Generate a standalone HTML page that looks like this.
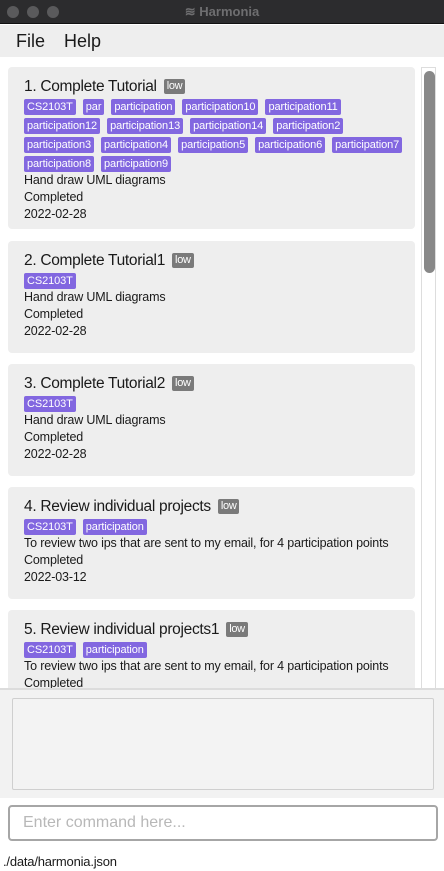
<!DOCTYPE html>
<html><head><meta charset="utf-8"><style>
*{box-sizing:border-box;margin:0;padding:0}
body{width:444px;height:871px;overflow:hidden;background:#fff;font-family:"Liberation Sans",sans-serif;color:#1a1a1a;position:relative}
.tb{position:absolute;left:0;top:0;width:444px;height:24px;background:#2c2c2e;border-bottom:1px solid #111}
.dot{position:absolute;top:6px;width:12px;height:12px;border-radius:50%;background:#5a5a5c}
.tt{position:absolute;left:0;width:444px;top:4px;text-align:center;color:#6e6e70;font-weight:bold;font-size:13px}
.menu{position:absolute;top:25px;left:0;width:444px;height:32px;background:#eeeeee;font-size:18px}
.menu span{position:absolute;top:6px}
.list{position:absolute;top:57px;left:0;width:444px;height:631px;overflow:hidden;background:#fff}
.card{position:absolute;left:8px;width:407px;background:#eeeeee;border-radius:4px;padding:10px 0 9px 16px}
.t{font-size:15.5px;line-height:20px;height:20px;white-space:nowrap;letter-spacing:-0.3px}
.low{display:inline-block;background:#7a7a7a;color:#fff;font-size:11px;line-height:15px;padding:0 3px;border-radius:2px;vertical-align:2px;margin-left:3px;letter-spacing:-0.3px}
.tags{margin-top:2px;display:flex;flex-wrap:wrap;gap:3px 7px;padding-right:0;margin-right:-4px}
.tag{background:#8267e0;color:#fff;font-size:11px;line-height:16px;height:16px;padding:0 3px;border-radius:2px;letter-spacing:-0.1px}
.l{font-size:12.5px;line-height:17px;white-space:nowrap;letter-spacing:-0.15px}
.sb{position:absolute;left:421px;top:67px;width:15px;height:621px;border:1px solid #ddd;border-bottom:none;background:#fff}
.th{position:absolute;left:2px;top:3px;width:11px;height:202px;background:#888;border-radius:6px}
.res{position:absolute;top:688px;left:0;width:444px;height:110px;background:#f2f2f2;border-top:2px solid #dcdcdc}
.rb{position:absolute;left:12px;top:8px;width:422px;height:92px;border:1px solid #cfcfcf;background:#f3f3f3;border-radius:2px}
.cmd{position:absolute;left:8px;top:805px;width:430px;height:36px;border:2px solid #a6a6a6;border-radius:4px;background:#fff;color:#b8b8b8;font-size:16px;padding:7px 0 0 13px}
.st{position:absolute;left:3px;top:854px;font-size:13px;letter-spacing:-0.2px}
</style></head><body>
<div class="tb"><div class="dot" style="left:7px"></div><div class="dot" style="left:27px"></div><div class="dot" style="left:47px"></div><div class="tt">≋ Harmonia</div></div>
<div class="menu"><span style="left:16px">File</span><span style="left:64px">Help</span></div>
<div class="list">
<div class="card" style="top:10px;height:162px"><div class="t">1. Complete Tutorial <span class="low">low</span></div>
<div class="tags"><span class="tag">CS2103T</span><span class="tag">par</span><span class="tag">participation</span><span class="tag">participation10</span><span class="tag">participation11</span><span class="tag">participation12</span><span class="tag">participation13</span><span class="tag">participation14</span><span class="tag">participation2</span><span class="tag">participation3</span><span class="tag">participation4</span><span class="tag">participation5</span><span class="tag">participation6</span><span class="tag">participation7</span><span class="tag">participation8</span><span class="tag">participation9</span></div>
<div class="l">Hand draw UML diagrams</div><div class="l">Completed</div><div class="l">2022-02-28</div></div>
<div class="card" style="top:184px;height:112px"><div class="t">2. Complete Tutorial1 <span class="low">low</span></div><div class="tags"><span class="tag">CS2103T</span></div>
<div class="l">Hand draw UML diagrams</div><div class="l">Completed</div><div class="l">2022-02-28</div></div>
<div class="card" style="top:307px;height:112px"><div class="t">3. Complete Tutorial2 <span class="low">low</span></div><div class="tags"><span class="tag">CS2103T</span></div>
<div class="l">Hand draw UML diagrams</div><div class="l">Completed</div><div class="l">2022-02-28</div></div>
<div class="card" style="top:430px;height:112px"><div class="t">4. Review individual projects <span class="low">low</span></div><div class="tags"><span class="tag">CS2103T</span><span class="tag">participation</span></div>
<div class="l">To review two ips that are sent to my email, for 4 participation points</div><div class="l">Completed</div><div class="l">2022-03-12</div></div>
<div class="card" style="top:553px;height:112px"><div class="t">5. Review individual projects1 <span class="low">low</span></div><div class="tags"><span class="tag">CS2103T</span><span class="tag">participation</span></div>
<div class="l">To review two ips that are sent to my email, for 4 participation points</div><div class="l">Completed</div><div class="l">2022-03-12</div></div>
</div>
<div class="sb"><div class="th"></div></div>
<div class="res"><div class="rb"></div></div>
<div class="cmd">Enter command here...</div>
<div class="st">./data/harmonia.json</div>
</body></html>
